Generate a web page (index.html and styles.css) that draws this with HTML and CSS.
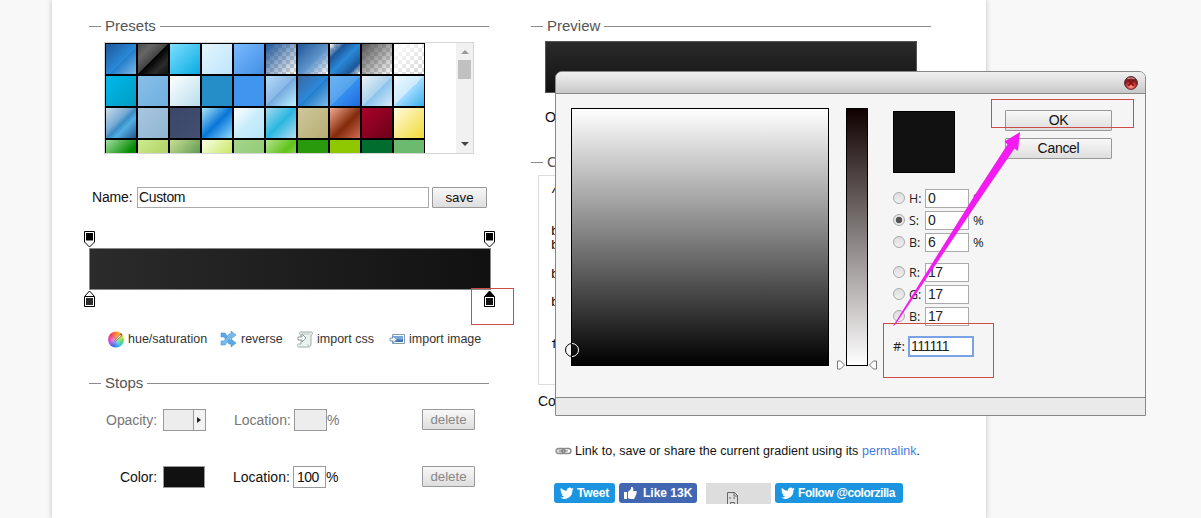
FILE: index.html
```html
<!DOCTYPE html>
<html lang="en">
<head>
<meta charset="utf-8">
<title>Gradient Editor</title>
<link rel="stylesheet" href="styles.css">
</head>
<body>
<main class="page">
  <section class="editor">
    <h2 class="heading">Presets</h2>
    <div class="presets">
      <div class="swatches" id="swatches"></div>
      <div class="scrollbar"><i class="up"></i><i class="thumb"></i><i class="down"></i></div>
    </div>
    <div class="name-row"><label>Name:</label><div class="name-input">Custom</div><div class="button save">save</div></div>
    <div class="gradient-editor">
      <div class="markers">
        <svg width="11" height="17"><path d="M.5 .5h10v10.500l-5 5-5-5z" fill="#fff" stroke="#000"/><path d="M2 2h7v7H2z"/><path d="M2 9.500h7" stroke="#888"/></svg>
        <svg width="11" height="17"><path d="M.5 .5h10v10.500l-5 5-5-5z" fill="#fff" stroke="#000"/><path d="M2 2h7v7H2z"/><path d="M2 9.500h7" stroke="#888"/></svg>
      </div>
      <div class="gradient-bar"></div>
      <div class="markers">
        <svg width="11" height="17"><path d="M.5 6.500l5-5.500 5 5.500v10H.5z" fill="#fff" stroke="#000"/><path d="M1 6.500h9" stroke="#000"/><path d="M2 8h7v7H2z" fill="#2b2b2b"/></svg>
        <svg width="11" height="17"><path d="M.5 6.500l5-5.500 5 5.500v10H.5z" stroke="#000"/><path d="M1 7h9v9H1z" fill="#fff"/><path d="M2 8h7v7H2z" fill="#111"/></svg>
      </div>
    </div>
    <div class="tools">
      <span class="tool hue"><i class="wheel"><svg width="17" height="17"><path d="M6.500 9.500l6-6.500 1.500 1.500-6.500 5.500z" fill="#fff" stroke="#8b4b43" stroke-width=".8"/><path d="M12 3l3-3 1 2-3 3z" fill="#b9332f"/></svg></i>hue/saturation</span>
      <span class="tool reverse"><svg width="17" height="16" viewBox="0 0 17 16"><path d="M1 2h4l6 8V8l5 4-5 4v-3H9L4 6H1z" fill="#5aa8e5" stroke="#4b93cc" stroke-width=".6"/><path d="M1 10h3l5-7h2V0l5 4-5 4V6l-6 8H1z" fill="#78bbed" stroke="#4b93cc" stroke-width=".6"/></svg>reverse</span>
      <span class="tool css"><svg width="16" height="17" viewBox="0 0 16 17"><path d="M4 1h10c2 0 2 3 0 3v9c0 2-1 3-3 3H2c-2 0-2-3 0-3h2V4C2 4 2 1 4 1z" fill="#e9f2ef" stroke="#9aada8"/><path d="M5 3h8M11 13c0 2 1 3 2 2" fill="none" stroke="#b8c7c2"/><path d="M1 6v3h4v2l4-4-4-4v3z" fill="#fff" stroke="#8d9e9d"/></svg>import css</span>
      <span class="tool image"><svg width="17" height="14" viewBox="0 0 17 14"><path d="M3.500 2.500h12v9h-12z" fill="#fff" stroke="#7c9bbb"/><path d="M5 4h9v6H5z" fill="#78a7df"/><path d="M5 10l4-3 3 1 2-1v3z" fill="#4371b6"/><path d="M1 6v3h3v2l4-3.500L4 4v2z" fill="#e9f4fd" stroke="#6f8cab" stroke-width=".8"/></svg>import image</span>
    </div>
    <h2 class="heading stops-heading">Stops</h2>
    <div class="stop-row disabled">
      <label class="kind">Opacity:</label><div class="opacity"><i></i></div>
      <label class="loc">Location:</label><div class="loc-input"></div><span>%</span><div class="button delete">delete</div>
    </div>
    <div class="stop-row color-row">
      <label class="kind">Color:</label><div class="color"></div>
      <label class="loc">Location:</label><div class="loc-input">100</div><span>%</span><div class="button delete">delete</div>
    </div>
  </section>
  <section class="output">
    <h2 class="heading">Preview</h2>
    <div class="preview"></div>
    <div class="orientation">Orientation:</div>
    <h2 class="heading">CSS</h2>
    <pre class="code">/*


b
b

b

b


f</pre>
    <div class="format">Color format:</div>
    <div class="link-row"><svg width="17" height="9"><rect x="1" y="1.500" width="9" height="5" rx="2.500" fill="#ddd" stroke="#8c8c8c" stroke-width="1.400"/><rect x="7" y="1.500" width="9" height="5" rx="2.500" fill="none" stroke="#8c8c8c" stroke-width="1.400"/><path d="M4 4h9" stroke="#777"/></svg><p>Link to, save or share the current gradient using its <a>permalink</a>.</p></div>
    <div class="social">
      <div class="badge tweet"><svg class="bird" viewBox="0 0 24 24"><path d="M23.6 4.9a9.7 9.7 0 0 1-2.8.8 4.900 4.900 0 0 0 2.100-2.700 9.700 9.700 0 0 1-3.100 1.200A4.900 4.900 0 0 0 11.500 8.600 13.800 13.800 0 0 1 1.700 3.500a4.900 4.900 0 0 0 1.500 6.500 4.800 4.800 0 0 1-2.200-.6 4.900 4.900 0 0 0 3.900 4.900 4.900 4.900 0 0 1-2.200.1 4.900 4.900 0 0 0 4.500 3.400A9.800 9.800 0 0 1 0 19.800 13.800 13.800 0 0 0 21.200 7.400a9.800 9.800 0 0 0 2.400-2.500z"/></svg>Tweet</div>
      <div class="badge like"><svg width="13" height="12" viewBox="0 0 13 12"><path d="M0 5h3v7H0zM4 5l3-3V0c2-1 3 2 2 4h3c1 0 1 2 0 2 1 1 0 2-.5 2 .5 1 0 2-.7 2 0 2-1 2-2 2H6l-2-1z" fill="#fff"/></svg>Like 13K</div>
      <div class="blocked"><svg width="13" height="15"><path d="M1.500 14V1.500h7l3 3V14M8 1v4h4M4 6v2M8 6v2M4.500 13v-1.500h4V13" fill="none" stroke="#666"/></svg></div>
      <div class="badge follow"><svg class="bird" viewBox="0 0 24 24"><path d="M23.6 4.9a9.7 9.7 0 0 1-2.8.8 4.900 4.900 0 0 0 2.100-2.700 9.700 9.700 0 0 1-3.100 1.200A4.900 4.900 0 0 0 11.500 8.600 13.800 13.800 0 0 1 1.700 3.500a4.900 4.900 0 0 0 1.500 6.500 4.800 4.800 0 0 1-2.200-.6 4.900 4.900 0 0 0 3.900 4.900 4.900 4.900 0 0 1-2.200.1 4.900 4.900 0 0 0 4.500 3.400A9.800 9.800 0 0 1 0 19.800 13.800 13.800 0 0 0 21.200 7.400a9.800 9.800 0 0 0 2.400-2.500z"/></svg>Follow @colorzilla</div>
    </div>
  </section>
</main>

<div class="dialog">
  <div class="titlebar"><svg width="14" height="14"><defs><radialGradient id="close" cy=".8"><stop stop-color="#ff9a8c"/><stop offset=".6" stop-color="#d64343"/><stop offset="1" stop-color="#7c2525"/></radialGradient></defs><circle cx="7" cy="7" r="6.400" fill="url(#close)" stroke="#542727"/><path d="M3.500 2.700Q7 1 10.500 2.700" stroke="#e5aaa5" fill="none"/><path d="M4.300 4.300l5.400 5.400M9.700 4.300L4.300 9.700" stroke="#881010" stroke-width="1.800"/></svg></div>
  <div class="dialog-body">
    <div class="map"><svg width="14" height="14"><path d="M7 .5A6.500 6.500 0 0 0 7 13.500" fill="none" stroke="#000"/><path d="M7 .5A6.500 6.500 0 0 1 7 13.500" fill="none" stroke="#fff"/></svg></div>
    <div class="slider"><svg width="40" height="10"><path d="M.5 1h3L7.500 5l-4 4h-3zM39.500 1h-3l-4 4 4 4h3z" fill="#fff" stroke="#777"/></svg></div>
    <div class="fields">
      <div class="current"></div>
      <div class="field"><i></i><b>H:</b><div>0</div><span>°</span></div>
      <div class="field on"><i></i><b>S:</b><div>0</div><span>%</span></div>
      <div class="field"><i></i><b>B:</b><div>6</div><span>%</span></div>
      <div class="field rgb"><i></i><b>R:</b><div>17</div></div>
      <div class="field"><i></i><b>G:</b><div>17</div></div>
      <div class="field"><i></i><b>B:</b><div>17</div></div>
      <div class="hex"><b>#:</b><div>111111</div></div>
    </div>
    <div class="actions"><div class="button">OK</div><div class="button">Cancel</div></div>
  </div>
  <div class="statusbar"></div>
</div>
<svg class="annotations" width="1201" height="518">
  <path d="M893 326L978 190 1007.500 144.500 1004.500 141.500 1020 132 1018 151 1014.500 148.500 986 190 895 325z" fill="#f31cf0"/>
</svg>
<div class="callout callout-stop"></div>
<div class="callout callout-ok"></div>
<div class="callout callout-hex"></div>
<script src="presets.js"></script>
</body>
</html>
```
FILE: styles.css
```css
* { box-sizing: border-box; }
body { margin: 0; width: 1201px; height: 518px; overflow: hidden; background: #f8f8f8; font: 14px/20px "Liberation Sans", Arial, sans-serif; color: #111; position: relative; }
.page { width: 934px; height: 518px; margin-left: 52px; padding: 16px 0 0 37px; display: flex; gap: 40px; background: #fff; box-shadow: 0 0 5px #bbb; }
.editor { width: 402px; }
.output { width: 400px; }
svg { display: block; flex: none; }
.heading { margin: 0; width: 400px; height: 20px; display: flex; align-items: center; gap: 4px; font-size: 15px; font-weight: normal; color: #555; }
.heading::before, .heading::after { content: ""; height: 1px; background: #8b8b8b; }
.heading::before { width: 12px; }
.heading::after { flex: 1; }
.presets { margin: 6px 0 0 15px; width: 370px; height: 112px; border: 1px solid #d6d6d6; display: flex; justify-content: space-between; overflow: hidden; }
.swatches { width: 320px; height: 128px; display: grid; grid-template-columns: repeat(10, 32px); grid-auto-rows: 32px; background: #000; }
.swatches i { margin: 1px; }
.scrollbar { width: 17px; height: 110px; background: #f1f1f1; display: flex; flex-direction: column; align-items: center; }
.up, .down { border: 4px solid transparent; border-top: 0; border-bottom-color: #999; margin-top: 7px; }
.thumb { width: 13px; height: 19px; margin-top: 6px; background: #c1c1c1; }
.down { border-top: 4px solid #444; border-bottom: 0; margin-top: auto; margin-bottom: 7px; }
.name-row { display: flex; height: 21px; margin: 33px 0 0 3px; }
.name-row label { width: 45px; letter-spacing: -.15px; }
.name-input { width: 292px; height: 21px; padding-left: 1px; border: 1px solid #aaa; line-height: 19px; background: #fff; letter-spacing: -.35px; }
.button { height: 21px; border: 1px solid #999; border-radius: 1px; background: linear-gradient(#f8f8f8, #dedede); font-size: 13.300px; line-height: 19px; text-align: center; color: #111; }
.save { width: 55px; margin-left: 3px; }
.gradient-editor { margin-top: 23px; }
.markers { width: 411px; margin-left: -5px; display: flex; justify-content: space-between; }
.gradient-bar { height: 42px; border: 1px solid #888; background: linear-gradient(90deg, #2b2b2b, #111); }
.tools { display: flex; height: 20px; margin: 22px 0 0 19px; font-size: 12.500px; color: #333; }
.tool { display: flex; align-items: center; gap: 3px; white-space: nowrap; }
.hue { width: 112px; }
.reverse { width: 77px; gap: 4px; }
.css { width: 92px; gap: 4px; }
.wheel { width: 17px; height: 17px; background: radial-gradient(circle, #fff8, transparent 60%) 0 2px/15px 15px no-repeat, conic-gradient(#ff8a32, #f4ea35, #60e150, #34c7e7, #3b5ce7, #d348d9, #f34255, #ff8a32); clip-path: circle(8px at 8px 9px); }
.stops-heading { margin-top: 24px; }
.stop-row { display: flex; height: 22px; margin-top: 16px; }
.color-row { margin-top: 35px; }
.kind { width: 68px; text-align: right; letter-spacing: -.05px; padding-top: 1px; }
.disabled { color: #777; }
.opacity { width: 43px; height: 22px; margin-left: 6px; padding: 7px 3px 0 34px; border: 1px solid #999; background: linear-gradient(90deg, #ededed 29px, #999 29px, #999 30px, #f3f3f3 30px); }
.opacity i { display: block; width: 0; height: 0; border: 3.500px solid transparent; border-left: 4px solid #222; border-right: 0; margin-left: -1px; }
.color { width: 42px; height: 22px; margin: 0 1px 0 6px; border: 1px solid #999; background: #111; }
.loc { width: 60px; margin-left: 28px; padding-top: 1px; }
.loc-input { width: 33px; height: 22px; border: 1px solid #999; padding: 1px 0 0 3px; line-height: 19px; letter-spacing: -.5px; }
.disabled .loc-input { background: #ededed; }
.color-row .loc { margin-left: 27px; }
.stop-row span { width: 95px; padding-top: 1px; }
.color-row span { width: 96px; }
.delete { width: 53px; color: #888; }
.preview { width: 372px; height: 52px; margin: 5px 0 0 14px; border: 1px solid #555; background: linear-gradient(#2b2b2b, #111); }
.orientation { height: 20px; margin: 14px 0 25px 14px; }
.code { margin: 3px 0 0 7px; width: 378px; height: 210px; padding: 7px 0 0 12px; border: 1px solid #ddd; font: 13px/14.100px "Liberation Mono", monospace; color: #000; overflow: hidden; }
.format { height: 20px; margin: 6px 0 0 7px; letter-spacing: -.15px; }
.link-row { height: 20px; margin: 30px 0 0 24px; display: flex; align-items: center; gap: 3px; font-size: 12.500px; letter-spacing: .05px; white-space: nowrap; }
.link-row p { margin: 0; }
.link-row a { color: #467be0; }
.social { display: flex; margin: 22px 0 0 23px; height: 21px; }
.badge { height: 20px; display: flex; align-items: center; border-radius: 3px; background: #1b95e0; color: #fff; font-size: 12px; font-weight: bold; white-space: nowrap; }
.bird { width: 14px; height: 14px; fill: #fff; margin: 0 3px 0 6px; }
.tweet { width: 61px; letter-spacing: -.2px; }
.like { width: 78px; margin-left: 4px; background: #4267b2; }
.like svg { margin: 0 6px 0 5px; }
.blocked { width: 65px; height: 21px; margin: 0 4px 0 9px; padding: 8px 0 0 20px; background: #ddd; overflow: hidden; }
.follow { width: 128px; letter-spacing: -.45px; }
.dialog { position: absolute; left: 555px; top: 71px; width: 591px; height: 345px; border: 1px solid #888; border-radius: 7px 7px 0 0; overflow: hidden; background: #f5f5f5; display: flex; flex-direction: column; }
.titlebar { height: 22px; flex: none; border-bottom: 1px solid #888; background: linear-gradient(#f0f0f0, #ddd 50%, #c8c8c8); display: flex; justify-content: flex-end; align-items: center; padding-right: 7px; }
.dialog-body { display: flex; padding: 14px 0 0 15px; height: 303px; flex: none; }
.map { width: 258px; height: 258px; border: 1px solid #000; background: linear-gradient(#fff, #000); position: relative; }
.map svg { position: absolute; left: -7px; bottom: 8px; }
.slider { width: 22px; height: 258px; margin-left: 17px; border: 1px solid #000; background: linear-gradient(#100000, #fff); position: relative; }
.slider svg { position: absolute; left: -10px; bottom: -5px; }
.fields { width: 112px; padding: 3px 0 0 25px; font: 13px/17px "Open Sans", "Noto Sans", sans-serif; color: #222; }
.current { width: 62px; height: 62px; border: 1px solid #000; background: #111; margin-bottom: 14px; }
.field { display: flex; align-items: center; height: 22px; }
.field > i { width: 12px; height: 12px; flex: none; border: 1px solid #aaa; border-radius: 50%; background: linear-gradient(#ddd, #f0f0f0); }
.field.on > i { background: radial-gradient(circle, #555 3px, #e8e8e8 3.600px); }
.field b { width: 16px; margin-left: 4px; flex: none; font-weight: normal; font-size: 12.500px; white-space: nowrap; }
.field > div { width: 44px; height: 19px; flex: none; padding-left: 2px; border: 1px solid #aaa; background: #fff; font: 14px/17px "Liberation Sans", sans-serif; letter-spacing: -.6px; }
.field span { margin-left: 4px; }
.rgb { margin-top: 8px; }
.hex { display: flex; margin-top: 9px; height: 20px; }
.hex b { width: 15px; font-weight: normal; line-height: 20px; white-space: nowrap; }
.hex > div { width: 66px; height: 21px; flex: none; padding-left: 1px; border: 2px solid #79a3e4; background: #fff; font: 14px/17px "Liberation Sans", sans-serif; letter-spacing: -.6px; }
.actions { display: flex; flex-direction: column; gap: 7px; padding: 2px 0 0 25px; }
.actions .button { width: 107px; font-size: 14px; letter-spacing: -.3px; }
.statusbar { flex: 1; border-top: 1px solid #888; background: #eaeaea; }
.annotations { position: absolute; left: 0; top: 0; }
.callout { position: absolute; border: 1px solid #cf4a4a; }
.callout-stop { left: 471px; top: 288px; width: 43px; height: 37px; }
.callout-ok { left: 991px; top: 99px; width: 143px; height: 29px; }
.callout-hex { left: 883px; top: 323px; width: 111px; height: 55px; }
```
FILE: presets.js
```js
const checker = 'conic-gradient(#d5d5d5 25%, #fff 0 50%, #d5d5d5 0 75%, #fff 0) 0 0/8px 8px';
const diagonal = colors => `linear-gradient(135deg, ${colors})`;
const presets = [
  '#1e5799,#2989d8 55%,#207cca 55%,#7db9e8', '#4c4c4c,#666 25%,#444 49%,#000 51%,#2b2b2b 75%,#131313', '#7ddfff,#08abe3', '#e4f5fc,#bde5ff', '#79b9ff,#438fe5',
  '#1e5799,#7db9e800', '#1e5799,#5f94c9 55%,#7db9e800', '#1e579900,#1e5799 25%,#2989d8 50%,#1e5799 80%,#7db9e800', '#555,#55555500', '#fff,#ffffff00',
  '#00b7ea,#009ec3', '#88bfe8,#70b0e0', '#fff,#b7deed', '#258dc8,#258dc8', '#4096ee,#4096ee',
  '#b3dcf8,#87b7e7 50%,#74a9de 50%,#bdf3ff', '#3b679e,#2b88d9 50%,#207cca 51%,#7db9e8', '#6db3f2,#54a3ee 50%,#3690f0 51%,#1e69de', '#ebf1f6,#abd3ee 50%,#89c3eb 51%,#d5ebfb', '#f0f9ff,#cbebff 50%,#a1dbff 50%,#39b0ec',
  '#cedbe9,#78abd6 40%,#3a8bc2 52%,#51aee5 65%,#26558b', '#a9c6df,#8fb5d2', '#3b4669,#435070', '#a9e4f7,#0876d8 50%,#8fd9fb', '#fff,#c8edfc 50%,#b9e5fa',
  '#a7dbee,#2ab6df 50%,#b7def2', '#cfc79a,#b6ad73', '#f2a88e,#832a0b 55%,#d16b4f', '#a90329,#6d0019', '#fffadc,#f1da36',
  '#a4e0a2,#008a00 60%', '#cdeb8e,#a5c956', '#c9de96,#398235', '#f8ffe8,#b7df2d', '#a4d48b,#8cc970',
  '#b4e391,#61c419 50%,#b4e391', '#299a0b,#299a0b', '#8fc800,#8fc800', '#006e2e,#006e2e', '#6bba70,#6bba70'
];
const swatches = document.getElementById('swatches');
presets.forEach((colors, index) => {
  const item = document.createElement('i');
  item.style.background = diagonal(colors) + (index >= 5 && index < 10 ? `, ${checker}` : '');
  swatches.append(item);
});
```
